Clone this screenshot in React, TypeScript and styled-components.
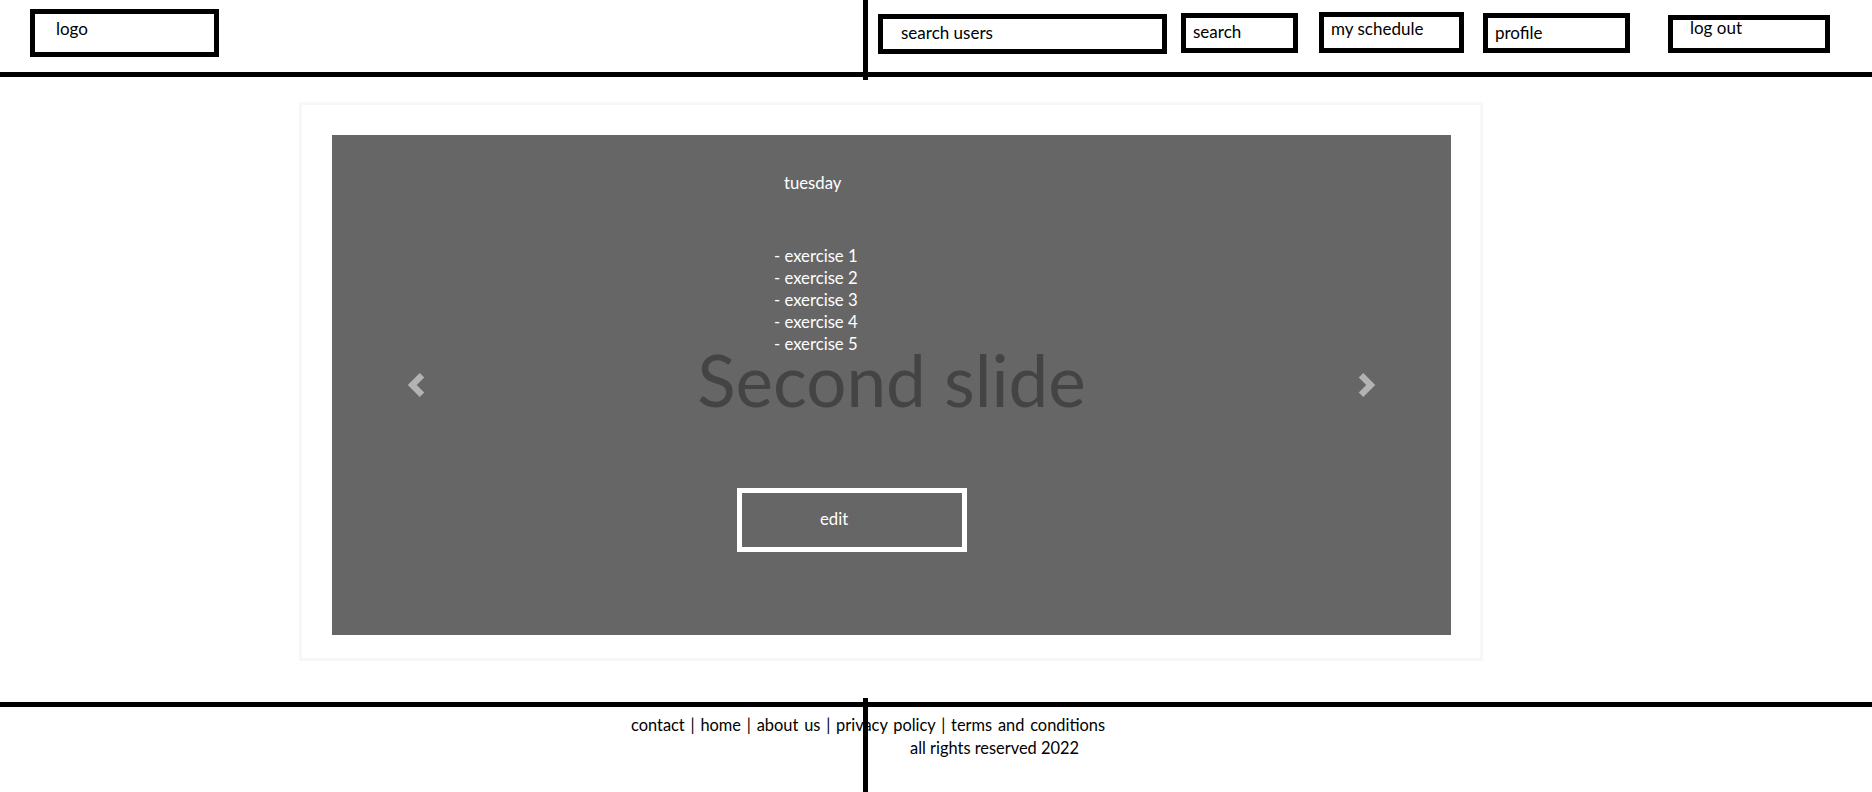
import React from "react";
import styled, { createGlobalStyle } from "styled-components";

const GlobalStyle = createGlobalStyle`
  html, body { margin: 0; padding: 0; background: #fff; }
  body {
    font-family: Lato, "Noto Sans", sans-serif;
    color: #000;
    overflow: hidden;
  }
  *, *::before, *::after { box-sizing: border-box; }
`;

const Page = styled.div`
  width: 1872px;
  height: 792px;
  display: flex;
  flex-direction: column;
`;

const Header = styled.header`
  position: relative;
  flex: none;
  height: 77px;
  border-bottom: 5px solid #000;
  display: flex;
  align-items: flex-start;

  &::after {
    content: "";
    position: absolute;
    left: 863px;
    top: 0;
    width: 5px;
    height: 80px;
    background: #000;
  }
`;

type BoxProps = {
  $left: number;
  $top: number;
  $w: number;
  $h: number;
  $padX: number;
};

const NavBox = styled.div<BoxProps>`
  flex: none;
  margin-left: ${(p) => p.$left}px;
  margin-top: ${(p) => p.$top}px;
  width: ${(p) => p.$w}px;
  height: ${(p) => p.$h}px;
  border: 5px solid #000;
  padding-left: ${(p) => p.$padX}px;
  font-size: 17px;
  line-height: 20px;
  white-space: nowrap;
  overflow: visible;
`;

const NavLabel = styled.span<{ $dy: number }>`
  display: block;
  margin-top: ${(p) => p.$dy}px;
`;

const Main = styled.main`
  flex: none;
  padding: 25px 0 0 299px;
`;

const Card = styled.section`
  width: 1184px;
  border: 3px solid #f6f7f9;
  padding: 30px 29px 23px 30px;
`;

const Slide = styled.div`
  position: relative;
  height: 500px;
  background: #666;
  overflow: hidden;
  display: flex;
  align-items: center;
  justify-content: center;
`;

const Placeholder = styled.div`
  font-size: 71px;
  line-height: 71px;
  color: #444;
  margin-bottom: 11px;
  white-space: nowrap;
`;

const Control = styled.div<{ $side: "left" | "right" }>`
  position: absolute;
  top: 0;
  bottom: 0;
  ${(p) => p.$side}: 0;
  width: 15%;
  display: flex;
  align-items: center;
  justify-content: center;
`;

const Caption = styled.div`
  position: absolute;
  inset: 0;
  display: flex;
  flex-direction: column;
  align-items: flex-start;
  color: #fff;
  font-size: 16.7px;
  line-height: 22px;
`;

const Day = styled.div`
  margin: 37px 0 0 452px;
`;

const ExerciseList = styled.ul`
  list-style: none;
  margin: 51px 0 0 442px;
  padding: 0;
`;

const EditButton = styled.button`
  margin: 133px 0 0 405px;
  width: 230px;
  height: 64px;
  border: 5px solid #fff;
  background: transparent;
  color: #fff;
  font: inherit;
  display: flex;
  align-items: center;
  padding: 0 0 2px 78px;
  cursor: pointer;
`;

const Footer = styled.footer`
  position: relative;
  flex: 1;
  margin-top: 41px;
  border-top: 5px solid #000;
  padding-top: 6px;
  font-size: 16.4px;
  line-height: 23px;

  &::after {
    content: "";
    position: absolute;
    left: 863px;
    top: -9px;
    bottom: 0;
    width: 5px;
    background: #000;
  }
`;

const FooterLinks = styled.div`
  margin-left: 631px;
  white-space: nowrap;
  word-spacing: 1.6px;
`;

const Copyright = styled.div`
  margin-left: 910px;
  white-space: nowrap;
`;

const Chevron = ({ dir }: { dir: "prev" | "next" }) => (
  <svg width="24" height="24" viewBox="0 0 8 8" aria-hidden="true">
    <path
      fill="#b3b3b3"
      d={
        dir === "prev"
          ? "M5.25 0l-4 4 4 4 1.5-1.5L4.25 4l2.5-2.5L5.25 0z"
          : "M2.75 0l-1.5 1.5L3.75 4l-2.5 2.5L2.75 8l4-4-4-4z"
      }
    />
  </svg>
);

const navItems = [
  { label: "search users", left: 659, top: 14, w: 289, h: 40, padX: 18, dy: 4 },
  { label: "search", left: 14, top: 13, w: 117, h: 40, padX: 7, dy: 4 },
  { label: "my schedule", left: 21, top: 12, w: 145, h: 41, padX: 7, dy: 2 },
  { label: "profile", left: 19, top: 13, w: 147, h: 40, padX: 7, dy: 5 },
  { label: "log out", left: 38, top: 15, w: 162, h: 38, padX: 17, dy: -2 },
];

const exercises = ["exercise 1", "exercise 2", "exercise 3", "exercise 4", "exercise 5"];

export default function App() {
  return (
    <>
      <GlobalStyle />
      <Page>
        <Header>
          <NavBox $left={30} $top={9} $w={189} $h={48} $padX={21}>
            <NavLabel $dy={5}>logo</NavLabel>
          </NavBox>
          {navItems.map((n) => (
            <NavBox key={n.label} $left={n.left} $top={n.top} $w={n.w} $h={n.h} $padX={n.padX}>
              <NavLabel $dy={n.dy}>{n.label}</NavLabel>
            </NavBox>
          ))}
        </Header>

        <Main>
          <Card>
            <Slide>
              <Placeholder>Second slide</Placeholder>
              <Control $side="left">
                <Chevron dir="prev" />
              </Control>
              <Control $side="right">
                <Chevron dir="next" />
              </Control>
              <Caption>
                <Day>tuesday</Day>
                <ExerciseList>
                  {exercises.map((e) => (
                    <li key={e}>- {e}</li>
                  ))}
                </ExerciseList>
                <EditButton type="button">edit</EditButton>
              </Caption>
            </Slide>
          </Card>
        </Main>

        <Footer>
          <FooterLinks>contact | home | about us | privacy policy | terms and conditions</FooterLinks>
          <Copyright>all rights reserved 2022</Copyright>
        </Footer>
      </Page>
    </>
  );
}
